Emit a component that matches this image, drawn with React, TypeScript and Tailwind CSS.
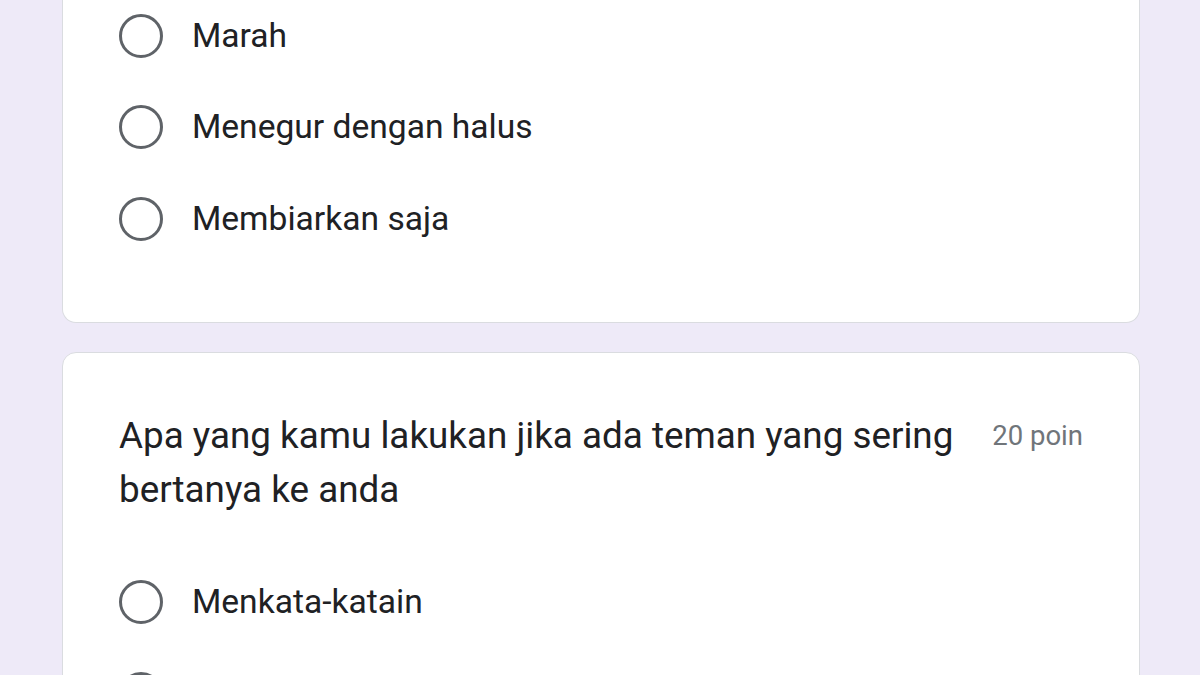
import React from 'react'

const font = { fontFamily: 'Roboto, "Noto Sans", Arial, sans-serif' }

function Radio() {
  return <div className="w-[44px] h-[44px] rounded-full border-[3.5px] border-[#5f6368] shrink-0" />
}

function Option({ label }: { label?: string }) {
  return (
    <div className="flex items-center h-[91.5px] gap-[29px]">
      <Radio />
      {label && <span className="text-[33.6px] text-[#202124] leading-none">{label}</span>}
    </div>
  )
}

export default function App() {
  return (
    <div className="w-[1200px] h-[675px] overflow-hidden bg-[#eeeaf8]" style={font}>
      <div className="pl-[62px] pr-[60px] -mt-[10px] flex flex-col gap-[29px]">
        <div className="bg-white border border-[#dadce0] border-t-0 rounded-b-[14px] pl-[56px] pr-[56px] pb-[57px]">
          <Option label="Marah" />
          <Option label="Menegur dengan halus" />
          <Option label="Membiarkan saja" />
        </div>

        <div className="bg-white border border-[#dadce0] rounded-[14px] pl-[56px] pr-[56px] pt-[56px] pb-[40px]">
          <div className="flex items-start gap-8">
            <p className="flex-1 text-[36.8px] leading-[54px] text-[#202124]">
              Apa yang kamu lakukan jika ada teman yang sering bertanya ke anda
            </p>
            <span className="shrink-0 text-[27.5px] leading-[54px] text-[#70757a]">20 poin</span>
          </div>
          <div className="mt-[40px]">
            <Option label="Menkata-katain" />
            {/* next option sits below the fold */}
            <Option />
          </div>
        </div>
      </div>
    </div>
  )
}
